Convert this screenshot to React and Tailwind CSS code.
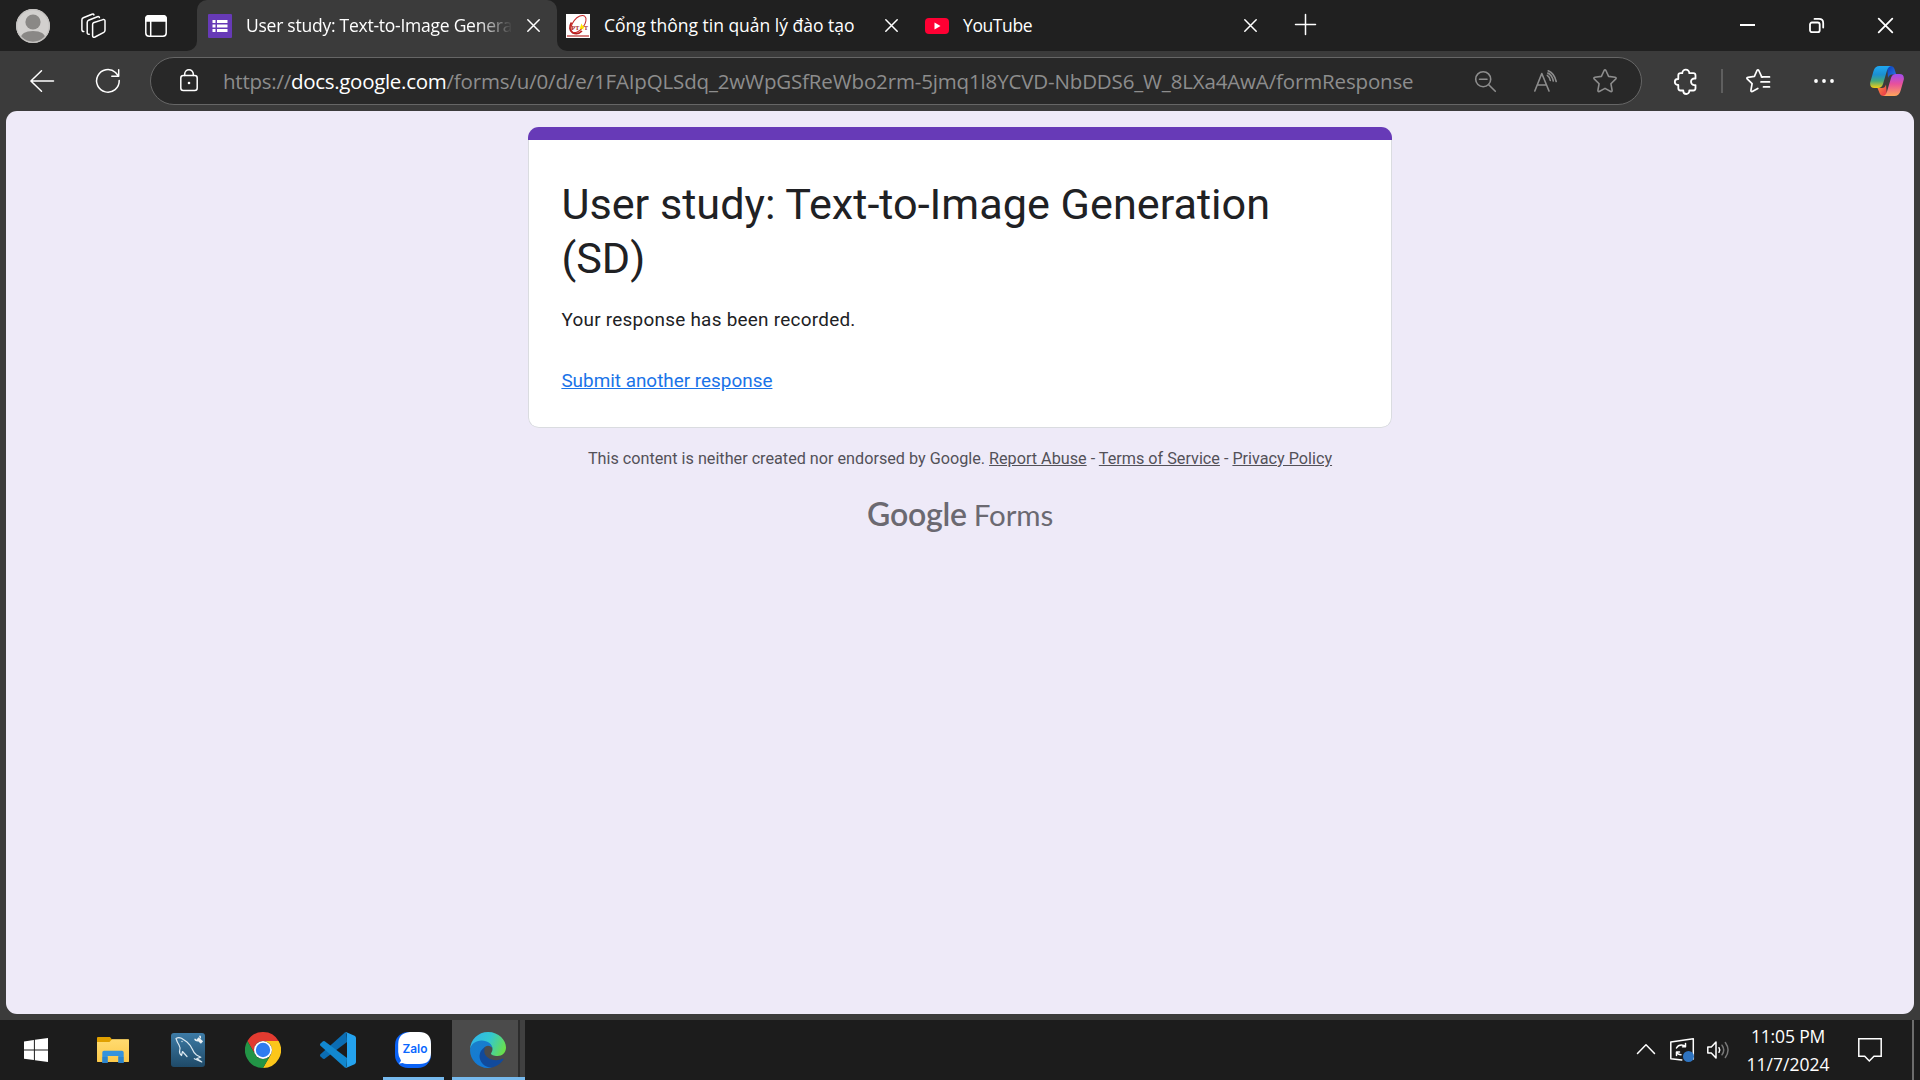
import React from "react";

const Icon = ({ w, h, className = "", children, stroke = "#fff", sw = 1.5 }) => (
  <svg
    width={w}
    height={h}
    viewBox={`0 0 ${w} ${h}`}
    fill="none"
    stroke={stroke}
    strokeWidth={sw}
    strokeLinecap="round"
    strokeLinejoin="round"
    className={"block shrink-0 overflow-visible " + className}
  >
    {children}
  </svg>
);

const CloseX = ({ className }) => (
  <Icon w={13} h={13} className={className}>
    <path d="M.8 .8 12.2 12.2M12.2 .8 .8 12.2" />
  </Icon>
);

function TabBar() {
  return (
    <div className="flex h-[51px] w-full bg-[#3b3b3b]">
      <div className="flex h-full w-[197px] shrink-0 items-center rounded-br-[10px] bg-[#202020] pl-4">
        <Icon w={34} h={34} stroke="none">
          <defs>
            <clipPath id="avatar"><circle cx="17" cy="17" r="17" /></clipPath>
          </defs>
          <circle cx="17" cy="17" r="17" fill="#d2d0ce" />
          <g clipPath="url(#avatar)">
            <ellipse cx="17" cy="13" rx="7.6" ry="7.6" fill="#8a8886" />
            <path d="M4.5 34v-4.500Q5 22 17 22t12.500 7.500V34z" fill="#8a8886" />
          </g>
          <circle cx="17" cy="17" r="16.300" stroke="#c4c2c0" strokeWidth="1.200" />
        </Icon>
        <Icon w={25} h={25} className="ml-[31px]">
          <path d="M12.300 9.800 22 6.600q2-.5 2 1.500v9.200q0 1.300-1.200 2l-8.800 4.700q-2.400 1-2.400-1.300V11.600q0-1.300.7-1.800z" />
          <path d="M8.200 21.300q-2 .3-2-1.700V9.500q0-1.600 1.400-2.300l8.800-3.500q1.700-.5 2 .8" />
          <path d="M2.800 18.500Q.9 18.500.9 16.800V7q0-1.600 1.400-2.200L11 1.200q1.600-.5 2 .7" />
        </Icon>
        <Icon w={22} h={22} className="ml-[39px]">
          <rect x=".8" y=".8" width="20.400" height="20.400" rx="3.200" />
          <path d="M.8 6V4Q.8 .8 4 .8h14q3.200 0 3.200 3.200v2z" fill="#fff" />
          <path d="M5.700 6v15" />
        </Icon>
      </div>
      <div className="h-full w-[360px] shrink-0 bg-[#202020]">
        <div className="flex h-full w-full items-center rounded-t-[10px] bg-[#3b3b3b] pl-[11px]">
          <svg width="24" height="24" viewBox="0 0 24 24" className="block shrink-0">
            <rect width="24" height="24" rx="1" fill="#673ab7" />
            <path fill="#fff" d="M4.500 6h3v3h-3zM9 6h10.500v3H9zM4.500 10.500h3v3h-3zM9 10.500h10.500v3H9zM4.500 15h3v3h-3zM9 15h10.500v3H9z" />
          </svg>
          <div className="mb-[2px] ml-[14px] w-[268px] overflow-hidden whitespace-nowrap text-[17.500px] leading-6 tracking-[-0.250px] text-white [mask-image:linear-gradient(to_right,black_86%,transparent_99.500%)]">
            User study: Text-to-Image Generation (SD)
          </div>
          <CloseX className="ml-[13px]" />
        </div>
      </div>
      <div className="flex h-full flex-1 items-center rounded-bl-[10px] bg-[#202020] pl-[9px]">
        <svg width="24" height="24" viewBox="0 0 24 24" className="block shrink-0">
          <rect width="24" height="24" fill="#fff" />
          <ellipse cx="12.500" cy="10" rx="5.500" ry="10" transform="rotate(38 12.500 10)" fill="none" stroke="#c62828" strokeWidth="1" />
          <path d="M5.500 8.500C3 12.500 3.500 17 6.500 18.700c3 1.500 7 .8 9.500-1.700" fill="none" stroke="#b92020" strokeWidth="1.700" />
          <path d="M15.500 9.500l1.300 2.500 2.500.3-2 1.500.3 2-2-1.200-2 1 .5-2.200z" fill="#ffe600" />
          <text x="5.500" y="16.200" fontSize="6" fontWeight="700" fill="#a61b1b" fontFamily="Liberation Serif, serif">PT</text>
          <text x="18" y="16.200" fontSize="6" fontWeight="700" fill="#a61b1b" fontFamily="Liberation Serif, serif">T</text>
          <path d="M1 22h22" stroke="#c9605f" strokeWidth="1.600" />
        </svg>
        <div className="mb-[2px] ml-[14px] w-[281px] whitespace-nowrap text-[17.500px] leading-6 tracking-[-0.010px] text-white">
          Cổng thông tin quản lý đào tạo
        </div>
        <CloseX />
        <svg width="24" height="16" viewBox="0 0 24 16" className="ml-[27px] block shrink-0">
          <rect width="24" height="16" rx="4" fill="#ff0033" />
          <path d="M9.500 4.600v6.800l6-3.400z" fill="#fff" />
        </svg>
        <div className="mb-[2px] ml-[14px] w-[281px] whitespace-nowrap text-[17.500px] leading-6 tracking-[-0.400px] text-white">
          YouTube
        </div>
        <CloseX />
        <Icon w={21} h={21} className="mb-[2px] ml-[38px]">
          <path d="M10.500 .5v20M.5 10.500h20" />
        </Icon>
        <div className="flex-1" />
        <Icon w={15} h={15} sw={2} className="[&_path]:[stroke-linecap:butt]">
          <path d="M0 7h15" />
        </Icon>
        <Icon w={15} h={15} sw={1.800} className="ml-[54px]">
          <rect x="1" y="4.500" width="9.700" height="9.700" rx="2" />
          <path d="M5.500 .9h4.500q4.200 0 4.200 4.200v4.400" />
        </Icon>
        <Icon w={15} h={15} sw={1.800} className="ml-[54px] mr-[27px]">
          <path d="M.7 .7 14.300 14.300M14.300 .7 .7 14.300" />
        </Icon>
      </div>
    </div>
  );
}

function CopilotLogo() {
  return (
    <svg width="34" height="30" viewBox="0 0 34 30" className="ml-[36px] block shrink-0">
      <defs>
        <linearGradient id="cpA" x1="0" y1="0" x2="0" y2="1">
          <stop offset="0" stopColor="#1fa8f2" />
          <stop offset=".4" stopColor="#1c8fd0" />
          <stop offset=".68" stopColor="#45a87c" />
          <stop offset="1" stopColor="#f5ce14" />
        </linearGradient>
        <linearGradient id="cpB" x1=".3" y1="0" x2=".3" y2="1">
          <stop offset="0" stopColor="#a04cf0" />
          <stop offset=".45" stopColor="#e8509c" />
          <stop offset="1" stopColor="#ffa65a" />
        </linearGradient>
        <linearGradient id="cpC" x1="0" y1="0" x2="1" y2="1">
          <stop offset="0" stopColor="#0b3cb8" />
          <stop offset="1" stopColor="#2b7de8" />
        </linearGradient>
        <linearGradient id="cpD" x1="0" y1="0" x2="1" y2="1">
          <stop offset="0" stopColor="#ff8f3c" />
          <stop offset="1" stopColor="#e8304c" />
        </linearGradient>
      </defs>
      <path d="M17 0h3.500q3 0 4 3l1.700 5.500H22q-3 0-4 3.500z" fill="url(#cpC)" />
      <path d="M17 30h-3.500q-3 0-4-3L7.500 22H12q3 0 4-3.500z" fill="url(#cpD)" />
      <path d="M9.500 0H21q-2.800.5-4 4.500l-4 13.500q-1.200 4-5 4H4.500Q-.5 22 .2 16.500L3.500 5Q5 0 9.500 0z" fill="url(#cpA)" />
      <path d="M24.500 30H13q2.800-.5 4-4.500l4-13.500q1.200-4 5-4h3.500q5 0 4.300 5.500L30.500 25q-1.500 5-6 5z" fill="url(#cpB)" />
    </svg>
  );
}

function Toolbar() {
  return (
    <div className="flex h-[60px] w-full items-center bg-[#3b3b3b] pl-[30px]">
      <Icon w={24} h={22}>
        <path d="M11.500 .7.900 11l10.600 10.300M1 11h22.500" />
      </Icon>
      <Icon w={24} h={24} className="ml-[42px]">
        <path d="M23.200 11.500A11.300 11.300 0 1 1 19.500 3.500L22.500 7M15.800 7.300h6.900V.8" />
      </Icon>
      <div className="ml-[30px] flex h-12 w-[1492px] shrink-0 items-center rounded-full border-[1.500px] border-[#666] bg-[#282828] pl-[29px]">
        <Icon w={18} h={22} className="mb-[2px]">
          <rect x=".8" y="6.500" width="16.400" height="15" rx="2.500" />
          <path d="M4.700 6.500V5a4.300 4.300 0 0 1 8.600 0v1.500" />
          <circle cx="9" cy="14" r="1.300" fill="#fff" stroke="none" />
        </Icon>
        <div className="ml-[25px] w-[1252px] whitespace-nowrap text-[20.500px] leading-7 text-[#8d8d8d]">
          <span className="tracking-[-0.250px]">https://</span>
          <span className="tracking-[-0.300px] text-white">docs.google.com</span>
          <span className="tracking-[-0.150px]">/forms/u/0/d/e/1FAIpQLSdq_2wWpGSfReWbo2rm-5jmq1l8YCVD-NbDDS6_W_8LXa4AwA/formResponse</span>
        </div>
        <Icon w={21} h={21} stroke="#8d8d8d" sw={1.600}>
          <circle cx="8.200" cy="8.200" r="7.500" />
          <path d="M4.500 8.200h7.500M13.700 13.700 20.300 20.300" />
        </Icon>
        <Icon w={23} h={22} stroke="#8d8d8d" sw={1.600} className="ml-[38px]">
          <path d="M.8 21 7.800 3.500 15 21M3.300 15h9" />
          <path d="M13.300 5.300q2.600 1.700 3 5.200M14.200.8Q20.500 3.500 22.200 11.500M13.800 3q4.300 2 5.500 8" />
        </Icon>
        <Icon w={24} h={24} stroke="#8d8d8d" sw={1.600} className="ml-[36px]">
          <path d="M11.100 1.500q.9-1.500 1.800 0l2.700 5.900 6.500.9q1.800.4.500 1.800l-4.700 4.600 1.200 6.600q.1 1.700-1.400 1.200L12 19.400l-5.700 3.100q-1.500.5-1.400-1.200l1.200-6.600-4.700-4.600q-1.300-1.400.5-1.800l6.500-.9z" />
        </Icon>
      </div>
      <Icon w={22} h={25} sw={1.800} className="ml-8">
        <path d="M7.800 4.500a3.500 3.500 0 1 1 7 0h4q2.200 0 2.200 2.200v3.100h-1.200a3.300 3.300 0 0 0 0 6.600H21v3.200q0 2.200-2.200 2.200h-4v.5a3 3 0 0 1-6 0v-.5H6q-2.200 0-2.200-2.200v-3.300h-.5a3 3 0 0 1 0-6h.5V6.700q0-2.200 2.200-2.200z" transform="translate(.5 -.3)" />
      </Icon>
      <div className="ml-[25px] h-6 w-[2px] bg-[#5f5f5f]" />
      <Icon w={24} h={24} sw={1.700} className="ml-[23px]">
        <path d="M16.500 8 15.500 7.400l-2.700-5.900q-.9-1.500-1.800 0L8.400 7.400l-6.500.9q-1.800.4-.5 1.800l4.700 4.600-1.200 6.600q-.1 1.700 1.400 1.200l5.500-3" />
        <path d="M15.500 7.900h8M15 12.900h8.500M17.500 17.900h6" />
      </Icon>
      <svg width="20" height="4" viewBox="0 0 20 4" className="ml-[44px] block shrink-0">
        <circle cx="2" cy="2" r="1.900" fill="#fff" />
        <circle cx="10" cy="2" r="1.900" fill="#fff" />
        <circle cx="18" cy="2" r="1.900" fill="#fff" />
      </svg>
      <CopilotLogo />
    </div>
  );
}

function FormPage() {
  return (
    <div className="h-[909px] w-full bg-[#3b3b3b] px-[6px] pb-[6px]">
      <div className="flex h-full w-full flex-col items-center rounded-[11px] bg-[#eeeaf8] pt-4 font-[Roboto,sans-serif]">
        <div className="flex h-[301px] w-[864px] flex-col overflow-hidden rounded-[10.800px]">
          <div className="h-[13px] shrink-0 bg-[#673ab7]" />
          <div className="flex-1 rounded-b-[10.800px] border border-t-0 border-[#dadce0] bg-white px-[32.400px] pt-[38px]">
            <h1 className="text-[43.200px] leading-[54px] text-[#202124]">
              User study: Text-to-Image Generation (SD)
            </h1>
            <p className="mt-5 text-[18.900px] leading-[27px] tracking-[0.270px] text-[#202124]">
              Your response has been recorded.
            </p>
            <p className="mt-[34px] text-[18.900px] leading-[27px] text-[#1a73e8] underline">
              Submit another response
            </p>
          </div>
        </div>
        <div className="mt-5 whitespace-nowrap text-[16.200px] leading-[22px] text-[#535158]">
          This content is neither created nor endorsed by Google. <span className="underline">Report Abuse</span> - <span className="underline">Terms of Service</span> - <span className="underline">Privacy Policy</span>
        </div>
        <div className="mt-[23px] flex items-baseline text-[#6b6971] font-[Lato,sans-serif]">
          <span className="text-[32px] font-semibold leading-[42px] tracking-[-0.200px]">Google</span>
          <span className="ml-[7px] text-[29.500px] leading-[42px] tracking-[-0.150px]">Forms</span>
        </div>
      </div>
    </div>
  );
}

function WindowsLogo() {
  return (
    <svg width="24" height="24" viewBox="0 0 24 24" className="ml-6 block">
      <path fill="#fff" d="M0 3.400 9.900 2v9.500H0zM10.900 1.800 24 0v11.500H10.900zM0 12.500h9.900v9.600L0 20.700zM10.900 12.500H24V24l-13.100-1.800z" />
    </svg>
  );
}

function ExplorerLogo() {
  return (
    <svg width="32" height="26" viewBox="0 0 32 26" className="ml-[49px] block">
      <defs>
        <linearGradient id="fold" x1="0" y1="0" x2="0" y2="1">
          <stop offset="0" stopColor="#ffdb70" />
          <stop offset="1" stopColor="#fcc94a" />
        </linearGradient>
      </defs>
      <path d="M0 1q0-1 1-1h12l2 2.500H32V24q0 1-1 1H1q-1 0-1-1z" fill="#e0a000" />
      <path d="M0 5h12.500L15 2.300h16q1 0 1 1V24q0 1-1 1H1q-1 0-1-1z" fill="url(#fold)" />
      <path d="M5.300 26V15.500q0-1.700 1.700-1.700h18q1.700 0 1.700 1.700V26h-5.400v-7h-10.600v7z" fill="#3593dd" />
      <path d="M5.300 20h5.400v6H5.300zM21.300 20h5.400v6h-5.400z" fill="#2477bd" opacity=".5" />
    </svg>
  );
}

function WorkbenchLogo() {
  return (
    <svg width="34" height="34" viewBox="0 0 34 34" className="ml-[42px] block">
      <defs>
        <linearGradient id="wb" x1="0" y1="0" x2="0" y2="1">
          <stop offset="0" stopColor="#3d7ba6" />
          <stop offset="1" stopColor="#1f4a68" />
        </linearGradient>
      </defs>
      <rect width="34" height="34" rx="3" fill="url(#wb)" />
      <path
        d="M5 5.500q2.500-1.500 5.500-.2l5.500 3.700q3.500 3 5.500 7.500 1.300 3.500 4 5.500l4.300 2.200-4 1.300 5 3.500-7.500-3.300M5 5.500q1 3.500 3 6.500 1.700 3 .7 5.500-.8 3 1.800 5l1-4 4.500 5"
        fill="none" stroke="#dbe8f0" strokeWidth="1.200" strokeLinejoin="round" strokeLinecap="round"
      />
      <circle cx="11" cy="8.500" r=".7" fill="#dbe8f0" />
      <path d="M26.500 5.500 31 9.500" stroke="#e9f0f4" strokeWidth="3.200" fill="none" />
      <path d="M24 5.800q0 2 3 2M28.500 2.800q1.200.8.800 2.500" stroke="#e9f0f4" strokeWidth="1.500" fill="none" />
    </svg>
  );
}

function ChromeLogo() {
  return (
    <svg width="36" height="36" viewBox="0 0 36 36" className="ml-10 block">
      <path d="M2.410 9A18 18 0 0 1 33.590 9H18a9 9 0 0 0-7.800 13.500z" fill="#e23b30" />
      <path d="M33.590 9A18 18 0 0 1 18 36l7.800-13.500A9 9 0 0 0 18 9z" fill="#fcc61a" />
      <path d="M18 36A18 18 0 0 1 2.410 9L10.200 22.500A9 9 0 0 0 25.800 22.500z" fill="#229446" />
      <circle cx="18" cy="18" r="9" fill="#fff" />
      <circle cx="18" cy="18" r="7.200" fill="#2f7cf0" />
    </svg>
  );
}

function VSCodeLogo() {
  return (
    <svg width="36" height="36" viewBox="0 0 36 36" className="ml-[39px] block">
      <path d="M26.500 .3 27 10 4.700 26.700q-1 .6-2-.1L.5 24.500q-1-1.200 0-2.300L24.600.8z" fill="#0b6db3" />
      <path d="M26.500 35.700 27 26 4.700 9.300q-1-.6-2 .1L.5 11.500q-1 1.200 0 2.300l24.100 21.400z" fill="#1288cf" />
      <path d="M26.500 35.700q-1.300.3-2.200-.6 2.700 1.200 2.700-1.500V2.400q0-2.700-2.700-1.500.9-.9 2.200-.6L34.600 3.800Q36 4.500 36 6v24q0 1.500-1.400 2.200z" fill="#24a2ee" />
    </svg>
  );
}

function ZaloLogo() {
  return (
    <svg width="36" height="36" viewBox="0 0 36 36" className="block">
      <rect width="36" height="36" rx="13" fill="#0a62f5" />
      <path d="M15 0h9q12 0 12 12v8.500q0 11.500-11.500 11.500H12q-2.500 0-4.500-1-1.800.6-3.700.4 2-1.400 2.200-3Q3.200 24.500 3.200 20V12Q3.200 1 15 0z" fill="#fff" />
      <text x="20" y="21.300" textAnchor="middle" fontSize="12" fontWeight="600" textLength="25" lengthAdjust="spacingAndGlyphs" fill="#0a68ff" fontFamily="Inter, sans-serif">Zalo</text>
    </svg>
  );
}

function EdgeLogo() {
  return (
    <svg width="36" height="36" viewBox="0 0 36 36" className="block">
      <defs>
        <linearGradient id="edTop" x1="0" y1=".3" x2="1" y2=".6">
          <stop offset="0" stopColor="#2fb4ec" />
          <stop offset=".5" stopColor="#33c8d0" />
          <stop offset="1" stopColor="#6ade4a" />
        </linearGradient>
        <linearGradient id="edLeft" x1="0" y1="0" x2=".5" y2="1">
          <stop offset="0" stopColor="#1a7fc9" />
          <stop offset="1" stopColor="#1279d8" />
        </linearGradient>
      </defs>
      <path d="M0 17.500C.4 7.500 8.300 0 18 0c11 0 18 8.300 18 15.500 0 5-3.800 8.500-8.500 8.500-4 0-6.500-1.300-6.500-2.500 0-.8 1.500-1.500 1.500-4.500 0-4-4.500-7-10.500-7S1 13 0 17.500z" fill="url(#edTop)" />
      <path d="M0 18c.5-6 6-9.500 11.500-9.500 6.500 0 11 4 11 8.500 0-2-2.500-3.300-4.500-3.300-3.500 0-6 4.300-6 8.300C12 30 17 35 22 35.500c-1.300.3-2.600.5-4 .5C8 36 0 28 0 18z" fill="url(#edLeft)" />
      <path d="M15 15q-5.500 3.500-5.500 9c0 6 5.500 12 12.500 11.500 5-1 9-4.500 11.300-7.800.5-.8-.2-1.300-1-.9-2 1-4 1.400-6 1.400-6.800 0-12-4-12-8.700 0-1.800.3-3.100.7-4.500z" fill="#114a9c" />
    </svg>
  );
}

function Taskbar() {
  return (
    <div className="flex h-[60px] w-full items-center bg-[#1c1c1c]">
      <WindowsLogo />
      <ExplorerLogo />
      <WorkbenchLogo />
      <ChromeLogo />
      <VSCodeLogo />
      <div className="ml-[27px] flex h-full w-[61px] flex-col items-center border-b-[3px] border-[#76b9ed] pt-3">
        <div className="-ml-px"><ZaloLogo /></div>
      </div>
      <div className="ml-2 flex h-full w-[73px] border-b-[3px] border-[#76b9ed]">
        <div className="h-full w-[66px] bg-[#4b4b4b] pl-[18px] pt-3"><EdgeLogo /></div>
        <div className="h-full w-[2px] bg-[#2c2c2c]" />
        <div className="h-full flex-1 bg-[#404040]" />
      </div>
      <div className="flex-1" />
      <Icon w={18} h={10} className="mb-[2px]">
        <path d="M.5 9.500 9 .8l8.500 8.700" />
      </Icon>
      <Icon w={24} h={23} className="mb-px ml-[15px]">
        <path d="M.8 4 23.300.8V21M.8 4v16.800l11 1.200" />
        <path d="M6.500 10q1.500-3 5-3 2.500 0 4 1.800V5.500M15.500 8.800h-3M6.500 17.500v-3.500h3M6.500 14.200q1.500 2.600 4.500 2.600" />
        <circle cx="18.500" cy="18.500" r="5.500" fill="#2f74c0" stroke="none" />
      </Icon>
      <Icon w={22} h={18} className="ml-[13px]">
        <path d="M.8 6v6h3.500l4.700 5V1L4.300 6z" />
        <path d="M12 6.700q1.500 2.300 0 4.600" />
        <path d="M15 4.200q3.500 4.800 0 9.600M18.300 1.500q5.500 7.500 0 15" stroke="#777" />
      </Icon>
      <div className="ml-[15px] w-[88px] whitespace-nowrap pb-[1px] text-center text-[17.500px] leading-7 text-white">
        <div className="tracking-[-0.150px]">11:05 PM</div>
        <div>11/7/2024</div>
      </div>
      <Icon w={24} h={24} className="ml-[26px] [&_path]:[stroke-linejoin:miter]">
        <path d="M.8 .8h22.400v17.400h-7.200L11.300 23l-4.600-4.800H.8z" />
      </Icon>
      <div className="ml-[30px] mr-[6px] h-full w-[2px] bg-[#6c6c6c]" />
    </div>
  );
}

export default function App() {
  return (
    <div className="flex h-[1080px] w-[1920px] flex-col overflow-hidden font-['Open_Sans','Noto_Sans',sans-serif]">
      <TabBar />
      <Toolbar />
      <FormPage />
      <Taskbar />
    </div>
  );
}
